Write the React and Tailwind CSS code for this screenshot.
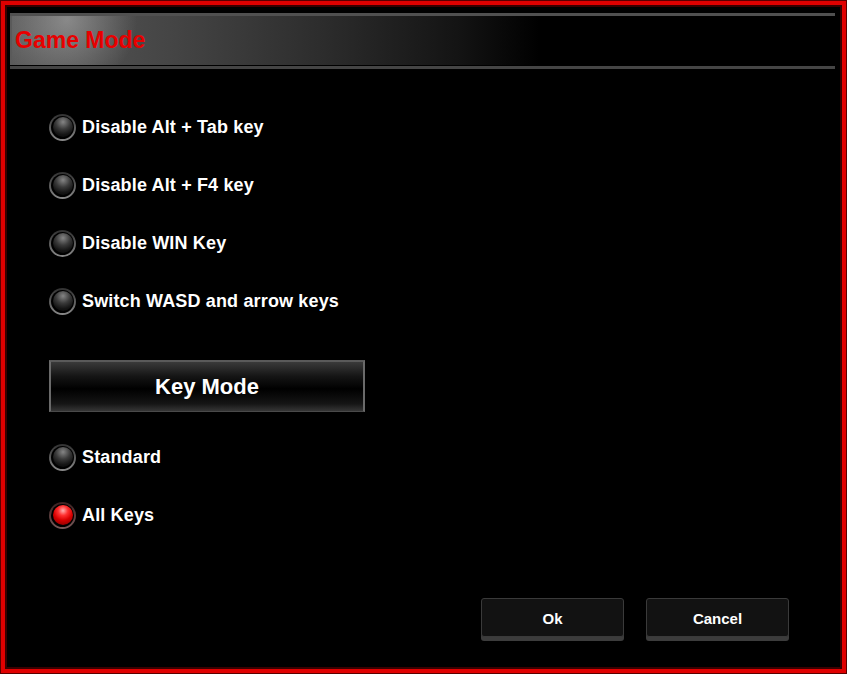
import { useState } from 'react';

const options = [
  'Disable Alt + Tab key',
  'Disable Alt + F4 key',
  'Disable WIN Key',
  'Switch WASD and arrow keys',
];

const keyModes = ['Standard', 'All Keys'];

function Radio({ on }) {
  return (
    <span
      className={`flex h-[27px] w-[27px] shrink-0 items-center justify-center rounded-full ${
        on
          ? 'bg-[linear-gradient(to_bottom,#3a2020,#7a5a5a)]'
          : 'bg-[linear-gradient(to_bottom,#303030,#8a8a8a)]'
      }`}
    >
      <span className="flex h-[23px] w-[23px] items-center justify-center rounded-full bg-black">
        <span
          className={`block h-[20px] w-[20px] rounded-full ${
            on
              ? 'bg-[radial-gradient(circle_at_50%_28%,#ffb0b0_0%,#ff3030_28%,#d80000_55%,#700000_100%)]'
              : 'bg-[radial-gradient(circle_at_50%_25%,#858585_0%,#3a3a3a_40%,#151515_70%,#050505_100%)]'
          }`}
        />
      </span>
    </span>
  );
}

function OptionRow({ label, on, onClick }) {
  return (
    <button className="flex h-[58px] items-center gap-[6px] text-left" onClick={onClick}>
      <Radio on={on} />
      <span className="text-[18px] font-bold tracking-[0.15px] text-white">{label}</span>
    </button>
  );
}

export default function App() {
  const [checked, setChecked] = useState([false, false, false, false]);
  const [mode, setMode] = useState(1);

  const toggle = (index) => {
    setChecked((prev) => prev.map((value, i) => (i === index ? !value : value)));
  };

  return (
    <div
      className="flex h-[674px] w-[847px] flex-col bg-black p-[10px] shadow-[inset_0_0_0_1px_#5a0000,inset_0_0_0_5px_#e00000,inset_0_0_0_7px_#3a0000]"
      style={{ fontFamily: '"Liberation Sans", Arial, sans-serif' }}
    >
      <div className="mt-[3px] mr-[2px] flex flex-col">
        <div className="h-[3px] bg-[#505050]" />
        <div className="flex h-[49px] items-center border-l-2 border-[#5a5a5a] bg-[radial-gradient(circle_at_55px_4px,rgba(190,190,190,0.5)_0px,rgba(190,190,190,0)_70px),linear-gradient(to_right,#5a5a5a_0%,#444_20%,#2c2c2c_38%,#141414_54%,#000_64%)] pl-[3px]">
          <h1 className="text-[23px] leading-none font-bold text-[#e80000]">Game Mode</h1>
        </div>
        <div className="h-[1px] bg-black" />
        <div className="h-[3px] bg-[#454545]" />
      </div>

      <div className="mt-[29px] flex flex-col pl-[39px]">
        {options.map((label, i) => (
          <OptionRow key={label} label={label} on={checked[i]} onClick={() => toggle(i)} />
        ))}

        <div className="mt-[30px] flex h-[52px] w-[316px] items-center justify-center border-x-2 border-t-2 border-b border-x-[#6a6a6a] border-t-[#5a5a5a] border-b-[#4a4a4a] bg-[linear-gradient(to_bottom,#3a3a3a_0%,#141414_30%,#000_55%,#151515_85%,#363636_100%)]">
          <span className="text-[22px] font-bold text-white">Key Mode</span>
        </div>

        <div className="mt-[16px] flex flex-col">
          {keyModes.map((label, i) => (
            <OptionRow key={label} label={label} on={mode === i} onClick={() => setMode(i)} />
          ))}
        </div>
      </div>

      <div className="mt-[54px] flex justify-end gap-[22px] pr-[48px]">
        <button className="h-[39px] w-[143px] rounded-[3px] border border-[#3a3a3a] bg-[#121212] pt-[4px] text-[15px] font-bold text-white shadow-[0_4px_0_#3c3c3c]">
          Ok
        </button>
        <button className="h-[39px] w-[143px] rounded-[3px] border border-[#3a3a3a] bg-[#121212] pt-[4px] text-[15px] font-bold text-white shadow-[0_4px_0_#3c3c3c]">
          Cancel
        </button>
      </div>
    </div>
  );
}
